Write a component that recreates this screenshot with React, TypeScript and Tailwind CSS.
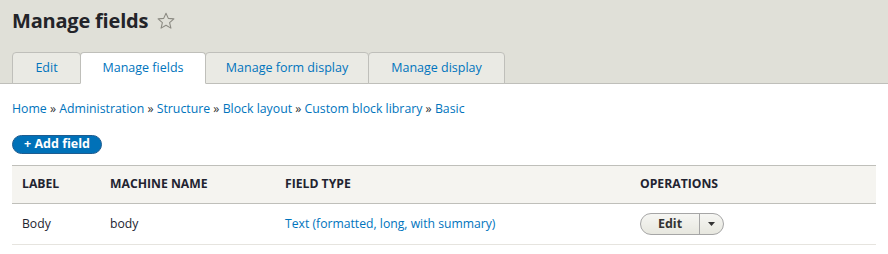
const font = { fontFamily: '"Open Sans", "DejaVu Sans", sans-serif' };

function Star() {
  return (
    <svg width="20" height="20" viewBox="0 0 20 20" className="ml-[8px]">
      <path
        d="M10 2.2l2.3 5.2 5.6.5-4.3 3.7 1.3 5.5L10 14.2l-4.9 2.9 1.3-5.5-4.3-3.7 5.6-.5z"
        fill="none"
        stroke="#8c8b83"
        strokeWidth="1.1"
        strokeLinejoin="round"
      />
    </svg>
  );
}

const tabs = [
  { label: "Edit", w: "w-[69px]" },
  { label: "Manage fields", w: "w-[126px]", active: true },
  { label: "Manage form display", w: "w-[164px]" },
  { label: "Manage display", w: "w-[137px]" },
];

const crumbs = ["Home", "Administration", "Structure", "Block layout", "Custom block library", "Basic"];

export default function App() {
  return (
    <div className="w-[888px] h-[254px] bg-white text-[#222330] overflow-hidden" style={font}>
      <div className="bg-[#e0e0d8] pt-[8px] px-[12px] border-b border-[#bfbfba]">
        <div className="flex items-center h-[26px]">
          <h1 className="text-[20px] font-bold text-[#232429] tracking-[-0.2px]">Manage fields</h1>
          <Star />
        </div>
        <div className="flex mt-[18px] -mb-px">
          {tabs.map((t) => (
            <div
              key={t.label}
              className={`${t.w} h-[32px] flex items-center justify-center text-[12.5px] text-[#0074bd] border border-[#bfbfba] rounded-t-[4px] -ml-px first:ml-0 ${
                t.active ? "bg-white border-b-white relative" : "bg-[#eaeae4]"
              }`}
            >
              {t.label}
            </div>
          ))}
        </div>
      </div>

      <div className="px-[12px]">
        <div className="mt-[15px] h-[19px] text-[12.3px] leading-[19px] text-[#0074bd] whitespace-pre">
          {crumbs.map((c, i) => (
            <span key={c}>
              {i > 0 && <span className="text-[#333]"> » </span>}
              {c}
            </span>
          ))}
        </div>

        <button className="mt-[17px] h-[19px] w-[90px] rounded-full bg-[#0071b8] border border-[#1e5c90] text-white text-[12.5px] font-bold flex items-center justify-center">
          + Add field
        </button>

        <table className="mt-[11px] w-full text-[12.2px] border-collapse">
          <thead>
            <tr className="bg-[#f5f4f0] border-t border-b border-[#bfbfba] h-[38px]">
              <th className="text-left font-bold pl-[10px] w-[98px]">LABEL</th>
              <th className="text-left font-bold w-[175px]">MACHINE NAME</th>
              <th className="text-left font-bold w-[355px]">FIELD TYPE</th>
              <th className="text-left font-bold">OPERATIONS</th>
            </tr>
          </thead>
          <tbody>
            <tr className="border-b border-[#e6e4df] h-[41px]">
              <td className="pl-[10px]">Body</td>
              <td>body</td>
              <td className="text-[#0074bd]">Text (formatted, long, with summary)</td>
              <td>
                <div className="flex w-[84px] h-[22px] rounded-full border border-[#a6a6a6] bg-gradient-to-b from-[#f6f6f3] to-[#e7e7df] text-[12.5px] font-bold text-[#333]">
                  <span className="w-[59px] flex items-center justify-center border-r border-[#a6a6a6]">Edit</span>
                  <span className="flex-1 flex items-center justify-center">
                    <svg width="7" height="4" viewBox="0 0 7 4">
                      <path d="M0 0h7L3.5 4z" fill="#333" />
                    </svg>
                  </span>
                </div>
              </td>
            </tr>
          </tbody>
        </table>
      </div>
    </div>
  );
}
